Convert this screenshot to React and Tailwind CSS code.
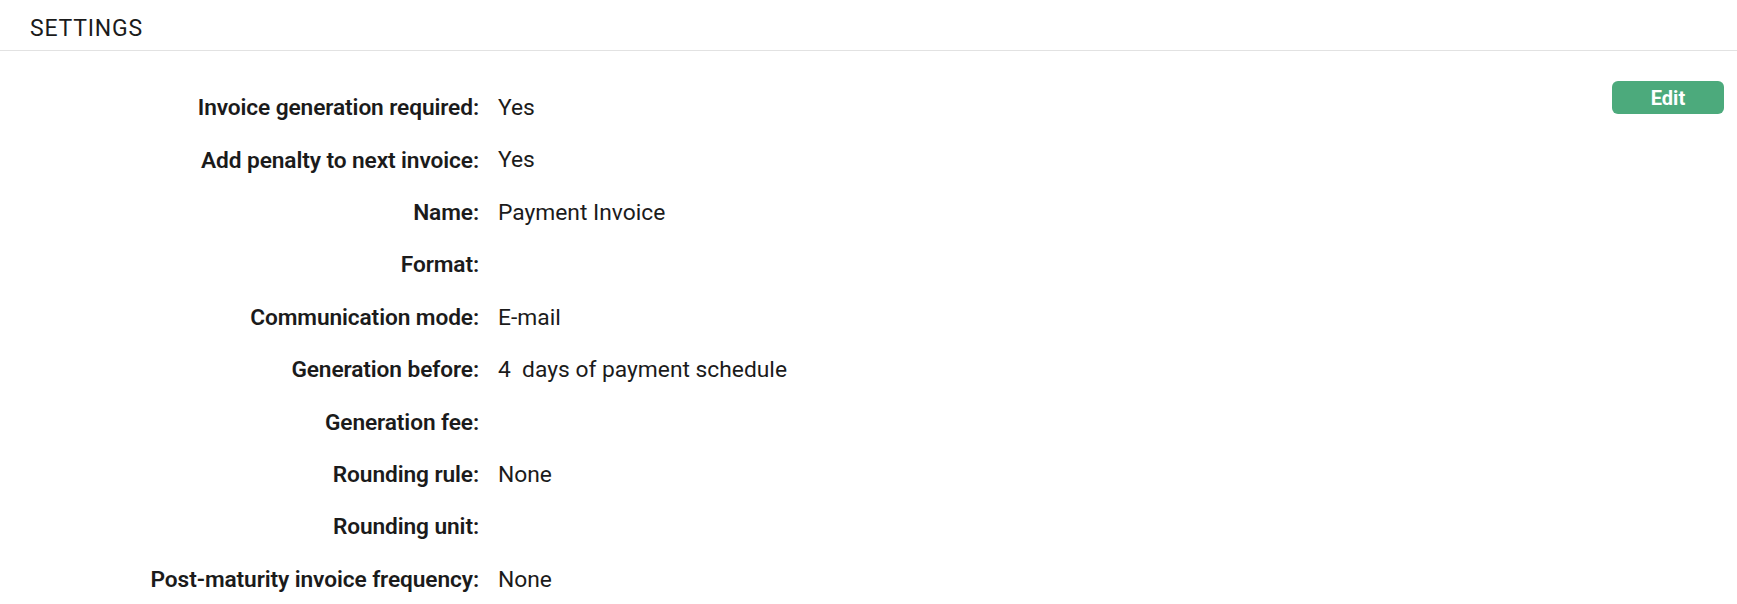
import React from 'react'

const rows = [
  ['Invoice generation required:', 'Yes'],
  ['Add penalty to next invoice:', 'Yes'],
  ['Name:', 'Payment Invoice'],
  ['Format:', ''],
  ['Communication mode:', 'E-mail'],
  ['Generation before:', '4\u00a0 days of payment schedule'],
  ['Generation fee:', ''],
  ['Rounding rule:', 'None'],
  ['Rounding unit:', ''],
  ['Post-maturity invoice frequency:', 'None'],
]

export default function App() {
  return (
    <div className="min-h-screen bg-white text-[#1b1b1b]" style={{ fontFamily: 'Roboto, "Liberation Sans", sans-serif' }}>
      <header className="h-[51px] border-b border-[#e2e2e2] pl-[30px] flex items-center">
        <h2 className="text-[23px] font-normal tracking-[0.8px] pt-[9px]">SETTINGS</h2>
      </header>

      <section className="flex pt-[30px] pr-[13px]">
        <div className="flex-1 pt-[1px]">
          {rows.map(([label, value]) => (
            <div key={label} className="grid grid-cols-[479px_1fr] gap-[19px] h-[52.4px] items-center">
              <span className="text-right text-[22.7px] font-semibold tracking-[-0.1px]">{label}</span>
              <span className="text-[22.8px] font-normal">{value}</span>
            </div>
          ))}
        </div>
        <button
          type="button"
          className="h-[33px] w-[112px] rounded-[6px] bg-[#4caa7c] text-white text-[20px] font-bold leading-none"
        >
          Edit
        </button>
      </section>
    </div>
  )
}
